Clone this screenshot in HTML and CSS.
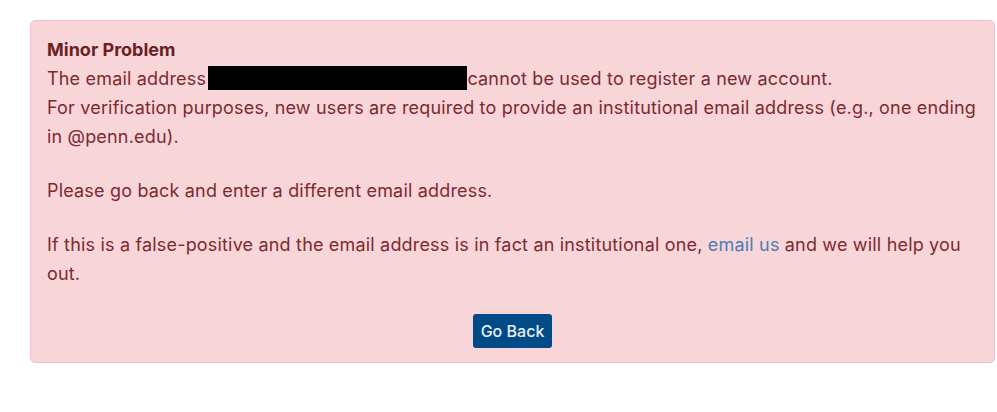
FILE: index.html
```html
<!DOCTYPE html>
<html lang="en">
<head>
<meta charset="utf-8">
<title>Minor Problem</title>
<link rel="stylesheet" href="styles.css">
</head>
<body>
<main class="page">
  <div class="alert">
    <h4 class="alert-title">Minor Problem</h4>
    <p class="alert-text">
      The email address <span class="redacted"></span>cannot be used to register a new account.<br>
      For verification purposes, new users are required to provide an institutional email address (e.g., one ending in @penn.edu).
    </p>
    <p class="alert-text">Please go back and enter a different email address.</p>
    <p class="alert-text">
      If this is a false-positive and the email address is in fact an institutional one, <a href="#" class="link">email us</a> and we will help you out.
    </p>
    <div class="actions">
      <button type="button" class="btn">Go Back</button>
    </div>
  </div>
</main>
</body>
</html>
```
FILE: styles.css
```css
html, body {
  margin: 0;
  background: #ffffff;
}

.page {
  padding: 20px 2px 0 30px;
  font-family: Inter, "Noto Sans", sans-serif;
}

.alert {
  background: #f7d5d9;
  border: 1px solid #f3c1c6;
  border-radius: 5px;
  color: #7d2a2f;
  padding: 15px 10px 14px 16px;
  font-size: 18px;
  line-height: 29px;
}

.alert-title {
  margin: 0;
  font-size: 18px;
  font-weight: 700;
  line-height: 28px;
  color: #6a1f24;
}

.alert-text {
  margin: 0 0 25px 0;
  letter-spacing: 0.18px;
}

.alert-text:last-of-type {
  margin-bottom: 0;
}

.redacted {
  display: inline-block;
  width: 259px;
  height: 24px;
  margin-left: -3px;
  background: #000;
  vertical-align: -5px;
}

.link {
  color: #4f7eb3;
  text-decoration: none;
}

.actions {
  display: flex;
  justify-content: center;
  padding-right: 6px;
  margin-top: 26px;
}

.btn {
  background: #004a86;
  color: #e8eef6;
  border: none;
  border-radius: 3px;
  font-family: Inter, "Noto Sans", sans-serif;
  font-size: 16px;
  font-weight: 500;
  width: 79px;
  height: 34px;
  padding: 0;
}
```
